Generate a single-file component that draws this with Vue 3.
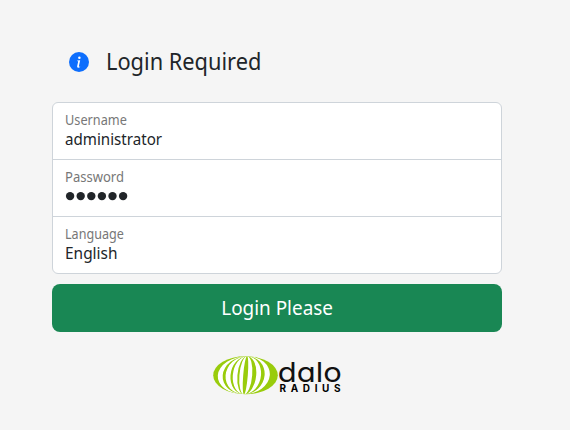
<script setup>
const fields = [
  { label: 'Username', value: 'administrator', key: 'user' },
  { label: 'Password', value: '', key: 'pass' },
  { label: 'Language', value: 'English', key: 'lang' },
]

// Light segments of the globe: outer and inner edge at the equator
const segments = [
  [4.8, 9.7], [12.6, 17.5], [19.8, 24.4], [26.4, 30.2],
  [39.2, 34.8], [48, 43.2], [56.8, 51.6],
]
const segmentPath = ([outer, inner]) => {
  const s = outer < 32.5 ? 0 : 1
  const r = (x) => Math.abs(x - 32.5)
  return `M32.5 .2A${r(outer)} 19 0 0 ${s} 32.5 38.2A${r(inner)} 19 0 0 ${1 - s} 32.5 .2Z`
}
</script>

<template>
  <main class="page">
    <form class="login" @submit.prevent>
      <header class="heading">
        <svg class="info" viewBox="0 0 16 16" aria-hidden="true">
          <circle cx="8" cy="8" r="8" fill="#0d6efd"/>
          <path fill="#fff" d="M8.93 6.588l-1 4.705c-.07.34.029.533.304.533.194 0 .487-.07.686-.246l-.088.416c-.287.346-.92.598-1.465.598-.703 0-1.002-.422-.808-1.319l.738-3.468c.064-.293.006-.399-.287-.47l-.451-.081.082-.381 2.29-.287z"/>
          <circle cx="8.3" cy="4.5" r="1" fill="#fff"/>
        </svg>
        <h1>Login Required</h1>
      </header>
      <div class="fields">
        <div v-for="f in fields" :key="f.key" class="field" :class="f.key">
          <span class="label">{{ f.label }}</span>
          <span v-if="f.value" class="value">{{ f.value }}</span>
          <svg v-else class="dots" viewBox="0 0 64 20">
            <circle v-for="n in 6" :key="n" :cx="5.1 + (n - 1) * 10.6" cy="10.1" r="4.2"/>
          </svg>
        </div>
      </div>
      <button type="submit"><span>Login Please</span></button>
      <svg class="logo" viewBox="0 0 130 40" aria-label="dalo RADIUS">
        <clipPath id="globe"><ellipse cx="32.5" cy="19.2" rx="32.3" ry="19"/></clipPath>
        <ellipse cx="32.5" cy="19.2" rx="32.3" ry="19" fill="#99cc0c"/>
        <g clip-path="url(#globe)">
          <path v-for="(s, i) in segments" :key="i" :d="segmentPath(s)" fill="#fff" transform="matrix(1 0 -.08 1 1.54 0)"/>
        </g>
        <text class="dalo" x="64.8" y="26.2" textLength="64" lengthAdjust="spacingAndGlyphs">dalo</text>
        <text class="radius" x="66.6" y="35.5" textLength="61">RADIUS</text>
      </svg>
    </form>
  </main>
</template>

<style>
body { background: #f5f5f5; }
</style>
<style scoped>
.page { height: 430px; overflow: hidden; background: #f5f5f5; color: #212529; font-family: "Noto Sans", sans-serif; }
.login { width: 450px; margin-left: 52px; padding-top: 44px; }
.heading { height: 36px; margin-bottom: 22px; padding-left: 17px; display: flex; align-items: center; gap: 17px; }
.info { width: 20px; height: 20px; }
h1 { margin: 0 0 2px; font-size: 24px; font-weight: 400; line-height: 36px; transform: scaleX(.908); transform-origin: left; }
.fields { box-sizing: border-box; height: 172px; background: #fff; border: 1px solid #ced4da; border-radius: 6px; }
.field { box-sizing: border-box; height: 57px; padding: 7px 12px; display: flex; flex-direction: column; }
.field:first-child { height: 56px; }
.field + .field { border-top: 1px solid #ced4da; }
.label { font-size: 13.6px; line-height: 19px; color: #777; transform: scaleX(.935); transform-origin: left; }
.pass .label { transform: scaleX(.96); }
.lang .label { transform: scaleX(.925); }
.value { font-size: 16px; line-height: 20px; transform: scaleX(.945); transform-origin: left; }
.lang .value { transform: scaleX(.965); }
.dots { width: 64px; height: 20px; fill: #212529; }
button { display: block; width: 450px; height: 48px; margin: 10px 0 24px; padding: 0; border: 0; border-radius: 8px; background: #198754; color: #fff; font: 20px/48px "Noto Sans", sans-serif; }
button span { display: inline-block; transform: scaleX(.945); }
.logo { display: block; width: 130px; height: 40px; margin-left: 161px; overflow: visible; }
.dalo { font-family: Inter, sans-serif; font-size: 27.5px; font-weight: 400; font-feature-settings: "cv11" 1; fill: #111; }
.radius { font-family: Inter, sans-serif; font-size: 10px; font-weight: 700; fill: #000; }
</style>
